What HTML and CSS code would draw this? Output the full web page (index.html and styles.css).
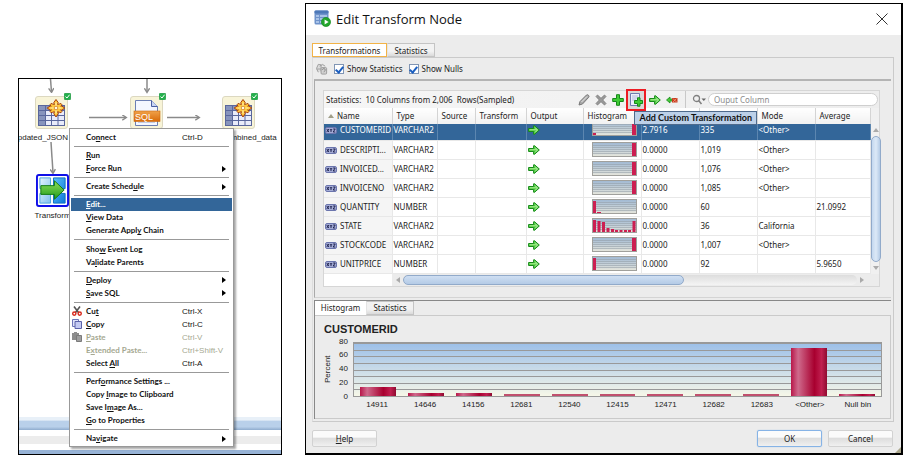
FILE: index.html
```html
<!DOCTYPE html>
<html lang="en">
<head>
<meta charset="utf-8">
<title>Edit Transform Node</title>
<link rel="stylesheet" href="styles.css">
</head>
<body>
<svg class="defs" aria-hidden="true">
  <defs>
    <linearGradient id="gThumb" x1="0" y1="0" x2="0" y2="1"><stop offset="0" stop-color="#9fb8d3"/><stop offset="1" stop-color="#e6e6dc"/></linearGradient>
    <linearGradient id="gOrange" x1="0" y1="0" x2="0" y2="1"><stop offset="0" stop-color="#f0a24a"/><stop offset="1" stop-color="#d96a08"/></linearGradient>
    <linearGradient id="gBlue" x1="0" y1="0" x2="1" y2="1"><stop offset="0" stop-color="#e4f4fd"/><stop offset="1" stop-color="#7fc0ee"/></linearGradient>
    <linearGradient id="gBlue2" x1="0" y1="0" x2="1" y2="1"><stop offset="0" stop-color="#5cc0fb"/><stop offset="1" stop-color="#0d78d8"/></linearGradient>
    <linearGradient id="gGreen" x1="0" y1="0" x2="0" y2="1"><stop offset="0" stop-color="#8fe05a"/><stop offset="1" stop-color="#1f9a1c"/></linearGradient>
    <marker id="head" viewBox="0 0 8 8" refX="6" refY="4" markerWidth="6" markerHeight="6" markerUnits="userSpaceOnUse" orient="auto"><path d="M1 .5L6.500 4L1 7.500" fill="none" stroke="#8a8a8a" stroke-width="1.800"/></marker>
  </defs>
  <symbol id="table-node" viewBox="0 0 33 33">
    <rect x=".5" y=".5" width="32" height="32" rx="2.500" fill="#f8f4d8" stroke="#dcd8c0"/>
    <rect x="3.500" y="9.500" width="26" height="20" fill="#e9ecfa" stroke="#5a679c"/>
    <path d="M4 10h6v19H4zM4 10h25v4H4z" fill="#8794bd"/>
    <path d="M10.500 10v19M16.500 10v19M23 10v19M4 14.500h25M4 19.500h25M4 24.500h25" stroke="#5a679c" fill="none"/>
    <path d="M21 3.500l2.200 3-.6 2 2-.6 1.400-.4 1 1.300-1.200 1.500 1-.3 3 2-3 2.200-1.200-.4 1.400 1.600-1 1.300-1.600-.4-1.800-.6.600 2-2.200 3.300-2.200-3.300.6-2-1.800.6-1.600.4-1-1.300 1.400-1.600-1.200.4-3-2.200 3-2 1 .3-1.200-1.500 1-1.300 1.400.4 2 .6-.6-2z" fill="#ffc83c" stroke="#a8400c"/>
    <path d="M21 6.500v11M15.500 12h11" stroke="#fff0a8" stroke-width="1.200"/>
    <circle cx="21" cy="12" r="1.800" fill="#fffbe0" stroke="#c86a10" stroke-width=".7"/>
  </symbol>
  <symbol id="sql-node" viewBox="0 0 33 33">
    <rect x=".5" y=".5" width="32" height="32" rx="2.500" fill="#f8f4d8" stroke="#dcd8c0"/>
    <path d="M5.500 4.500h16l6 6v19h-22z" fill="#f4f7ff" stroke="#6c7fb4"/>
    <path d="M21.500 4.500v6h6" fill="#c9d6f4" stroke="#4a5fa0"/>
    <path d="M8 26.500h17" stroke="#c4cde4"/>
    <rect x="4" y="15" width="26" height="10.500" fill="url(#gOrange)" stroke="#c8680f" stroke-width=".6"/>
    <text x="14" y="23.500" text-anchor="middle" class="sql-text">SQL</text>
  </symbol>
  <symbol id="transform-node" viewBox="0 0 34 34">
    <rect x="1" y="1" width="32" height="32" rx="2" fill="#fff" stroke="#1010e8" stroke-width="2"/>
    <path d="M4 4h11v11H4zM4 20h11v10H4z" fill="url(#gBlue)" stroke="#4aa3dd"/>
    <path d="M18 4h12v11H18zM18 20h12v10H18z" fill="url(#gBlue2)" stroke="#0c6fc4"/>
    <path d="M5 12h14V7l10 9.500L19 26v-5H5z" fill="url(#gGreen)" stroke="#127a12"/>
  </symbol>
  <symbol id="ok-badge" viewBox="0 0 7 7"><rect x=".3" y=".3" width="6.400" height="6.400" rx="1" fill="#22b14c" stroke="#0f8a30" stroke-width=".6"/><path d="M1.500 3.600L3 5l2.600-3.300" fill="none" stroke="#fff"/></symbol>
  <symbol id="xyz" viewBox="0 0 12 7"><rect x=".5" y=".5" width="11" height="6" rx="1.500" fill="#a4acd6" stroke="#6b75ad"/><path d="M1.800 2l2 3M3.800 2l-2 3M5 2l1 1.500L7 2M6 3.500V5M8.200 2h2l-2 3h2" fill="none" stroke="#181c48" stroke-width=".9"/></symbol>
  <symbol id="go" viewBox="0 0 12 10"><path d="M.6 3.500h5V.8l.9-.1L11.300 5 6.500 9.300l-.9-.1V6.500h-5z" fill="#49c93a" stroke="#178a1a"/><path d="M1.500 4.800h7" stroke="#b4f29a"/><path d="M7 2.500L9.500 5 7 7.500" fill="none" stroke="#e2fbd0" stroke-width=".8"/></symbol>
  <symbol id="thumb" viewBox="0 0 45 15"><rect x=".5" y=".5" width="44" height="14" fill="url(#gThumb)" stroke="#a0a09c"/><path d="M1 3.500h43M1 5.500h43M1 7.500h43M1 9.500h43M1 11.500h43" stroke="#929ca6" stroke-opacity=".55"/></symbol>
  <symbol id="thumb-end" viewBox="0 0 45 15"><use href="#thumb" width="45" height="15"/><path d="M40 1h4v13h-4z" fill="#cc1f52"/></symbol>
  <symbol id="thumb-start" viewBox="0 0 45 15"><use href="#thumb" width="45" height="15"/><path d="M1 2h3v12h-3z" fill="#cc1f52"/></symbol>
</svg>

<section class="canvas" aria-label="Workflow">
  <svg class="links" viewBox="0 0 262 376" aria-hidden="true">
    <g fill="none" stroke="#8a8a8a" stroke-width="1.500">
      <path d="M31.500 0l1 13" marker-end="url(#head)"/><path d="M128 0v13" marker-end="url(#head)"/>
      <path d="M70 38.500h37" marker-end="url(#head)"/><path d="M148 38.500h32" marker-end="url(#head)"/>
      <path d="M32 63l2 31" marker-end="url(#head)"/>
    </g>
  </svg>
  <div class="node node-a"><svg class="pic"><use href="#table-node"/></svg><svg class="badge"><use href="#ok-badge"/></svg><span>updated_JSON</span></div>
  <div class="node node-b"><svg class="pic"><use href="#sql-node"/></svg><svg class="badge"><use href="#ok-badge"/></svg></div>
  <div class="node node-c"><svg class="pic"><use href="#table-node"/></svg><svg class="badge"><use href="#ok-badge"/></svg><span>combined_data</span></div>
  <div class="node node-d"><svg class="pic"><use href="#transform-node"/></svg><span>Transform</span></div>
  <div class="bands"><i class="band-blue"></i><i class="band-gray"></i><i class="band-foot"></i></div>

  <div class="menu" role="menu">
    <button role="menuitem"><span>Co<u>n</u>nect</span><kbd>Ctrl-D</kbd></button>
    <hr>
    <button role="menuitem"><span><u>R</u>un</span></button>
    <button role="menuitem" class="sub"><span><u>F</u>orce Run</span></button>
    <hr>
    <button role="menuitem" class="sub"><span>Create Sched<u>u</u>le</span></button>
    <hr>
    <button role="menuitem" class="active"><span><u>E</u>dit...</span></button>
    <button role="menuitem"><span><u>V</u>iew Data</span></button>
    <button role="menuitem"><span>Generate Appl<u>y</u> Chain</span></button>
    <hr>
    <button role="menuitem"><span>Sho<u>w</u> Event Log</span></button>
    <button role="menuitem"><span>Va<u>l</u>idate Parents</span></button>
    <hr>
    <button role="menuitem" class="sub"><span><u>D</u>eploy</span></button>
    <button role="menuitem" class="sub"><span><u>S</u>ave SQL</span></button>
    <hr>
    <button role="menuitem"><svg viewBox="0 0 10 10"><path d="M2 .5l4.500 6M8 .5L3.500 6.500" stroke="#555" stroke-width="1.600"/><circle cx="2.300" cy="7.600" r="1.600" fill="none" stroke="#d8281c" stroke-width="1.400"/><circle cx="7.700" cy="7.600" r="1.600" fill="none" stroke="#d8281c" stroke-width="1.400"/></svg><span>Cu<u>t</u></span><kbd>Ctrl-X</kbd></button>
    <button role="menuitem"><svg viewBox="0 0 10 10"><path d="M.5.500h6v7h-6z" fill="#dfe3fa" stroke="#6d74b8"/><path d="M3 2.500h6.500v7H3z" fill="#c3c9f2" stroke="#5a61a8"/></svg><span><u>C</u>opy</span><kbd>Ctrl-C</kbd></button>
    <button role="menuitem" disabled><svg viewBox="0 0 10 10"><path d="M0 1h2V0h3v1h2v7H0z" fill="#8d8d8d"/><path d="M4.500 3.500H9.500v6h-5z" fill="#9e9e9e" stroke="#7a7a7a"/></svg><span><u>P</u>aste</span><kbd>Ctrl-V</kbd></button>
    <button role="menuitem" disabled><span>E<u>x</u>tended Paste...</span><kbd>Ctrl+Shift-V</kbd></button>
    <button role="menuitem"><span>Select <u>A</u>ll</span><kbd>Ctrl-A</kbd></button>
    <hr>
    <button role="menuitem"><span>Perf<u>o</u>rmance Settings ...</span></button>
    <button role="menuitem"><span>Copy <u>I</u>mage to Clipboard</span></button>
    <button role="menuitem"><span>Save I<u>m</u>age As...</span></button>
    <button role="menuitem"><span><u>G</u>o to Properties</span></button>
    <hr>
    <button role="menuitem" class="sub"><span>Na<u>v</u>igate</span></button>
  </div>
</section>

<main class="dialog" role="dialog" aria-labelledby="dlg-title">
  <header class="titlebar">
    <svg class="app-icon" viewBox="0 0 17 17"><rect x=".5" y=".5" width="14" height="14" rx="1.500" fill="#6f93cb"/><rect x=".5" y=".5" width="14" height="3" rx="1" fill="#4d78b8"/><path d="M2 5h3v2H2zM6 5h7v2H6zM2 8h3v2H2zM6 8h7v2H6zM2 11h3v2H2zM6 11h7v2H6z" fill="#a9c3e8"/><circle cx="12" cy="12" r="4.600" fill="#23a52c" stroke="#0f8a1a" stroke-width=".6"/><path d="M10.600 9.400l4 2.600-4 2.600z" fill="#fff"/></svg>
    <h1 id="dlg-title">Edit Transform Node</h1>
    <button class="close" aria-label="Close"><svg viewBox="0 0 12 12"><path d="M.5.500l11 11M11.500.500l-11 11" stroke="#333" fill="none"/></svg></button>
  </header>

  <div class="content">
    <div class="tabs top" role="tablist"><button role="tab" class="tab on" aria-selected="true">Transformations</button><button role="tab" class="tab">Statistics</button></div>
    <div class="frame">
      <div class="options">
        <svg class="opt-icon" viewBox="0 0 13 12"><path d="M2.500 9.500l-2-4 2-4.500 3 .5v7M1 6h4M4 3l3-2 3 2" fill="#dcdcdc" stroke="#9a9a9a"/><rect x="5.500" y="4.500" width="6" height="7" rx="1" fill="#d2d2d2" stroke="#999"/><path d="M7 7c0-2 3-2 3 0s-1.500 1-1.500 2.500" fill="none" stroke="#888"/></svg>
        <label><input type="checkbox" checked>Show Statistics</label>
        <label><input type="checkbox" checked>Show Nulls</label>
      </div>
      <div class="upper">
        <div class="grid-panel">
          <div class="toolbar">
            <span class="summary">Statistics:&nbsp; 10 Columns from 2,006&nbsp; Rows(Sampled)</span>
            <button class="tool" aria-label="Edit"><svg viewBox="0 0 12 12"><path d="M1 11l1-3.500L8.500 1q1-.8 2 .3t.2 2L4.500 10z" fill="#aaa" stroke="#777"/><path d="M3.500 8L9 2.500" stroke="#e6e6e6"/></svg></button>
            <button class="tool" aria-label="Remove"><svg viewBox="0 0 12 12"><path d="M1 2.500L2.500 1 6 4.300 9.500 1 11 2.500 7.700 6 11 9.500 9.500 11 6 7.700 2.500 11 1 9.500 4.300 6z" fill="#999" stroke="#777" stroke-width=".8"/></svg></button>
            <button class="tool" aria-label="Add"><svg viewBox="0 0 12 12"><path d="M4.500.7h3v3.800h3.800v3H7.500v3.800h-3V7.500H.7v-3h3.800z" fill="#3fcb35" stroke="#15881a"/></svg></button>
            <button class="tool marked" aria-label="Add Custom Transformation"><svg viewBox="0 0 14 14"><path d="M1.500.500h9v12h-9z" fill="#eceffb" stroke="#7079ae"/><path d="M3 3h6M3 5h6M3 7h4" stroke="#b4b9de"/><path d="M8.500 4.800h2.500V7.500h2.500V10.500H11v2.700H8.500V10.500H5.500V7.500h3z" fill="#3fcb35" stroke="#15881a"/></svg></button>
            <button class="tool" aria-label="Include"><svg viewBox="0 0 12 10"><use href="#go"/></svg></button>
            <button class="tool" aria-label="Exclude"><svg viewBox="0 0 12 10"><path d="M.5 5L4 2v2h3v2H4v2z" fill="#49c93a" stroke="#178a1a" stroke-width=".8"/><path d="M6 3h5.500v4.500H6z" fill="#c63a1c"/><path d="M7 3.500l3.500 3.500M10.500 3.500L7 7" stroke="#f29a80" stroke-width=".8"/></svg></button>
            <span class="divider"></span>
            <label class="search" for="q"><svg viewBox="0 0 15 11"><circle cx="4.500" cy="4.500" r="3" fill="none" stroke="#808080" stroke-width="1.300"/><path d="M6.800 6.800L9.500 10" stroke="#808080" stroke-width="1.600"/><path d="M9.500 4.500h4.500l-2.200 2.500z" fill="#666"/></svg></label>
            <input id="q" type="text" placeholder="Ouput Column">
            <span class="tooltip" role="tooltip">Add Custom Transformation</span>
          </div>
          <div class="grid-body">
            <table>
              <colgroup><col class="c-name"><col class="c-type"><col class="c-src"><col class="c-trn"><col class="c-out"><col class="c-num"><col class="c-num"><col class="c-num"><col class="c-num"><col class="c-avg"></colgroup>
              <thead><tr><th class="sorted">Name</th><th>Type</th><th>Source</th><th>Transform</th><th>Output</th><th>Histogram</th><th></th><th></th><th>Mode</th><th>Average</th></tr></thead>
              <tbody>
                <tr class="selected"><td><svg class="xyz"><use href="#xyz"/></svg>CUSTOMERID</td><td>VARCHAR2</td><td></td><td></td><td><svg class="go"><use href="#go"/></svg></td><td><svg class="thumb" viewBox="0 3 45 12"><use href="#thumb-end" width="45" height="15"/><path d="M1 12h3v2h-3z" fill="#cc1f52"/></svg></td><td>2.7916</td><td>335</td><td>&lt;Other&gt;</td><td></td></tr>
                <tr><td><svg class="xyz"><use href="#xyz"/></svg>DESCRIPTI...</td><td>VARCHAR2</td><td></td><td></td><td><svg class="go"><use href="#go"/></svg></td><td><svg class="thumb"><use href="#thumb-end"/></svg></td><td>0.0000</td><td>1,019</td><td>&lt;Other&gt;</td><td></td></tr>
                <tr><td><svg class="xyz"><use href="#xyz"/></svg>INVOICED...</td><td>VARCHAR2</td><td></td><td></td><td><svg class="go"><use href="#go"/></svg></td><td><svg class="thumb"><use href="#thumb-end"/></svg></td><td>0.0000</td><td>1,076</td><td>&lt;Other&gt;</td><td></td></tr>
                <tr><td><svg class="xyz"><use href="#xyz"/></svg>INVOICENO</td><td>VARCHAR2</td><td></td><td></td><td><svg class="go"><use href="#go"/></svg></td><td><svg class="thumb"><use href="#thumb-end"/></svg></td><td>0.0000</td><td>1,085</td><td>&lt;Other&gt;</td><td></td></tr>
                <tr><td><svg class="xyz"><use href="#xyz"/></svg>QUANTITY</td><td>NUMBER</td><td></td><td></td><td><svg class="go"><use href="#go"/></svg></td><td><svg class="thumb" viewBox="0 0 45 15"><use href="#thumb-start" width="45" height="15"/><path d="M5 13h4v1h-4z" fill="#cc1f52"/></svg></td><td>0.0000</td><td>60</td><td></td><td>21.0992</td></tr>
                <tr><td><svg class="xyz"><use href="#xyz"/></svg>STATE</td><td>VARCHAR2</td><td></td><td></td><td><svg class="go"><use href="#go"/></svg></td><td><svg class="thumb" viewBox="0 0 45 15"><use href="#thumb" width="45" height="15"/><path d="M1 2h3v12h-3zM5.500 3h3v11h-3zM10 4h3v10h-3zM14.500 10h3v4h-3zM19 11h3v3h-3zM23 12h3v2h-3zM27.500 12h3v2h-3zM32 12h3v2h-3zM36 12h3v2h-3zM40.500 3h3v11h-3z" fill="#cc1f52"/></svg></td><td>0.0000</td><td>36</td><td>California</td><td></td></tr>
                <tr><td><svg class="xyz"><use href="#xyz"/></svg>STOCKCODE</td><td>VARCHAR2</td><td></td><td></td><td><svg class="go"><use href="#go"/></svg></td><td><svg class="thumb"><use href="#thumb-end"/></svg></td><td>0.0000</td><td>1,007</td><td>&lt;Other&gt;</td><td></td></tr>
                <tr><td><svg class="xyz"><use href="#xyz"/></svg>UNITPRICE</td><td>NUMBER</td><td></td><td></td><td><svg class="go"><use href="#go"/></svg></td><td><svg class="thumb"><use href="#thumb-start"/></svg></td><td>0.0000</td><td>92</td><td></td><td>5.9650</td></tr>
              </tbody>
            </table>
            <div class="vscroll"><i class="up"></i><b></b><i class="down"></i></div>
          </div>
          <div class="hscroll"><div class="htrack"><i class="left"></i><div class="rail"><b></b></div><i class="right"></i></div></div>
        </div>
      </div>

      <div class="lower">
        <div class="tabs" role="tablist"><button role="tab" class="tab on" aria-selected="true">Histogram</button><button role="tab" class="tab">Statistics</button></div>
        <div class="chart-panel">
          <h2>CUSTOMERID</h2>
          <div class="chart">
            <span class="ylabel">Percent</span>
            <div class="yaxis"><span>80</span><span>60</span><span>40</span><span>20</span><span>0</span></div>
            <div class="plot">
              <i style="height:17%"></i><i style="height:4%"></i><i style="height:4%"></i><i class="low" style="height:2%"></i><i class="low" style="height:2%"></i><i class="low" style="height:2%"></i><i class="low" style="height:2%"></i><i class="low" style="height:2%"></i><i class="low" style="height:2%"></i><i style="height:90%"></i><i style="height:3%"></i>
            </div>
            <div class="xaxis"><span>14911</span><span>14646</span><span>14156</span><span>12681</span><span>12540</span><span>12415</span><span>12471</span><span>12682</span><span>12683</span><span>&lt;Other&gt;</span><span>Null bin</span></div>
          </div>
        </div>
      </div>
    </div>
  </div>

  <footer class="actions">
    <button class="btn help"><span><u>H</u>elp</span></button>
    <button class="btn ok">OK</button>
    <button class="btn">Cancel</button>
    <svg class="grip" viewBox="0 0 6 6" aria-hidden="true"><path d="M6 0v6H0z" fill="#aaa68c"/></svg>
  </footer>
</main>
</body>
</html>
```

FILE: styles.css
```css
* { box-sizing: border-box; }

body {
  margin: 0;
  padding: 3px 2px 1px 18px;
  min-height: 100vh;
  display: flex;
  gap: 23px;
  background: #fff;
  color: #222;
  font: 8px/12px "Noto Sans", sans-serif;
}

button, input { font: inherit; color: inherit; }
button { border: 0; padding: 0; background: none; }
svg { display: block; }
.defs { position: absolute; width: 0; height: 0; }

/* Workflow canvas */
.canvas {
  flex: 0 0 264px;
  margin-top: 75px;
  position: relative;
  border: 1px solid #000;
  background: #fff;
  overflow: hidden;
  display: flex;
  flex-direction: column;
  justify-content: flex-end;
  font-family: "Liberation Sans", sans-serif;
}
.links { position: absolute; left: 0; top: 0; width: 262px; height: 376px; }
.node { position: absolute; width: 33px; display: flex; flex-direction: column; align-items: center; gap: 3px; white-space: nowrap; }
.node .pic { width: 33px; height: 33px; flex: none; }
.node .badge { position: absolute; top: -3px; right: -3px; width: 7px; height: 7px; }
.node-a { left: 16px; top: 17px; align-items: flex-end; }
.node-b { left: 111px; top: 17px; }
.node-c { left: 203px; top: 17px; align-items: flex-start; }
.node-d { left: 17px; top: 95px; }
.sql-text { font: 9px "Liberation Sans", sans-serif; fill: #fff; }
.bands { display: flex; flex-direction: column; gap: 6px; }
.bands i { display: block; }
.band-blue { height: 13px; background: linear-gradient(#e8f0f8 0 25%, #b9d0ea 30%, #b9d0ea 75%, #8facce); }
.band-gray { height: 8px; background: #ececec; }
.band-foot { height: 4px; background: #97b3d6; }

/* Context menu */
.menu {
  position: absolute;
  left: 50px;
  top: 49px;
  bottom: 7px;
  width: 165px;
  padding: 2px 1px 1px;
  display: flex;
  flex-direction: column;
  background: #fff;
  border: 1px solid #999;
  box-shadow: 2px 2px 2px rgba(0, 0, 0, .35);
  color: #111;
  font: 700 8px/13px Lato, sans-serif;
}
.menu button {
  flex: none;
  height: 13px;
  display: grid;
  grid-template-columns: 15px 96px 1fr;
  align-items: center;
  text-align: left;
  white-space: nowrap;
}
.menu button span { grid-column: 2; grid-row: 1; }
.menu kbd { grid-column: 3; grid-row: 1; font: 8px/13px "Liberation Sans", sans-serif; }
.menu svg { grid-column: 1; grid-row: 1; width: 10px; height: 10px; margin-left: 1px; }
.menu hr {
  flex: 1;
  width: calc(100% - 6px);
  margin: 0 3px;
  border: 0;
  background: linear-gradient(#999, #999) center / 100% 1px no-repeat;
}
.menu .active { background: #336699; color: #fff; }
.menu button:disabled { color: #a5a891; }
.menu .sub::after {
  content: "";
  grid-column: 3;
  grid-row: 1;
  justify-self: end;
  margin-right: 6px;
  border-left: 4px solid #000;
  border-top: 3px solid transparent;
  border-bottom: 3px solid transparent;
}

/* Dialog */
.dialog {
  flex: 1;
  min-width: 0;
  display: flex;
  flex-direction: column;
  border: solid #000;
  border-width: 1px 2px 2px 1px;
  background: #ececec;
}
.titlebar { height: 31px; padding: 0 13px 2px 8px; display: flex; align-items: center; gap: 5px; background: #fff; }
.app-icon { width: 17px; height: 17px; }
.titlebar h1 { margin: 0; flex: 1; font: 13px/20px "Open Sans", sans-serif; color: #111; }
.close svg { width: 12px; height: 12px; }
.content { flex: 1; display: flex; flex-direction: column; padding: 8px 7px 0 6px; }

.tabs { display: flex; height: 14px; }
.tab {
  width: 48px;
  border: 1px solid #c4c4c4;
  border-left-color: #e4e4e4;
  background: linear-gradient(#f2f2f2 60%, #dadada);
  line-height: 11px;
}
.tab.on { width: 51px; border-color: #fff; background: #fff; }
.top .tab.on { width: 75px; border-color: #f2b347; }

.frame { flex: 1; display: flex; flex-direction: column; padding: 0 2px 2px 1px; border: 1px solid #cacaca; border-left-color: #ddd; }
.options { height: 21px; padding-left: 2px; display: flex; align-items: center; gap: 6px; }
.opt-icon { width: 12px; height: 12px; }
.options label { display: flex; align-items: center; gap: 3px; }
.options input {
  appearance: none;
  width: 10px;
  height: 10px;
  margin: 0;
  border: 1px solid #8095b4;
  background: #fff;
  display: grid;
  place-items: center;
}
.options input:checked::after {
  content: "";
  width: 3px;
  height: 6px;
  margin-bottom: 2px;
  border: solid #1c5fc0;
  border-width: 0 2px 2px 0;
  transform: rotate(40deg);
}

.upper { padding: 9px 11px 10px 8px; border-top: 2px solid #b4b4b4; border-left: 1px solid #aaa; border-bottom: 1px solid #d4d4d4; }
.grid-panel { border: 1px solid #d6d6d6; background: #f0f0f0; }
.toolbar { position: relative; height: 17px; padding-right: 1px; display: flex; align-items: center; background: linear-gradient(90deg, #f6f6f6, #ededed); }
.summary { flex: 1; padding-left: 2px; }
.tool { width: 17px; height: 17px; display: grid; place-items: center; }
.tool svg { width: 12px; height: 12px; }
.tool.marked { width: 20px; height: 22px; border: 2px solid #ed1c24; background: #d8d8d8; position: relative; }
.tool.marked svg { width: 14px; height: 14px; }
.divider { width: 1px; height: 17px; margin: 0 6px 0 5px; background: #c8c8c8; }
.search svg { width: 15px; height: 11px; }
.toolbar input {
  width: 170px;
  height: 13px;
  margin-left: 1px;
  padding: 0 5px;
  border: 1px solid #cfcfcf;
  border-radius: 7px;
  background: #fff;
}
.toolbar input::placeholder { color: #8c8c8c; opacity: 1; }
.tooltip {
  position: absolute;
  z-index: 2;
  right: 122px;
  top: 20px;
  padding: 0 4px;
  border: 1px solid #4e6a8c;
  background: #bcd0e8;
  color: #111;
  font: 700 9px/12px Lato, sans-serif;
  white-space: nowrap;
}

.grid-body { display: flex; }
table { flex: 1; width: 0; table-layout: fixed; border-collapse: collapse; background: #fff; }
.c-name { width: 68px; }
.c-type { width: 45px; }
.c-src { width: 38px; }
.c-trn { width: 51px; }
.c-out { width: 57px; }
.c-num { width: 58px; }
.c-avg { width: 55px; }
th {
  height: 16px;
  padding: 0 0 0 4px;
  text-align: left;
  font-weight: 400;
  line-height: 12px;
  border-right: 1px solid #d4d4d4;
  background: linear-gradient(#fff, #f1f1f1);
}
th.sorted::before {
  content: "";
  display: inline-block;
  margin: 0 3px 1px 0;
  border: solid transparent;
  border-width: 0 3px 4px;
  border-bottom-color: #a09e88;
}
td {
  height: 19px;
  padding: 0 0 0 1px;
  line-height: 12px;
  white-space: nowrap;
  overflow: hidden;
  border-right: 1px solid #e8e8e8;
  border-bottom: 1px solid #e8e8e8;
}
td:first-child { background: #f5f5f5; }
.selected td, .selected td:first-child { height: 16px; padding-bottom: 2px; background: #336699; color: #fff; border-right-color: #5c86b0; vertical-align: top; }
.xyz { display: inline-block; width: 12px; height: 7px; margin-right: 3px; vertical-align: -1px; }
.go { width: 12px; height: 10px; }
.thumb { width: 45px; height: 15px; margin-left: 7px; }
.selected .thumb { height: 12px; }
.selected .go { margin-top: 1px; }

.vscroll { width: 11px; margin-top: 16px; padding: 4px 0; display: flex; flex-direction: column; align-items: center; gap: 4px; }
.vscroll b { flex: 1; width: 10px; border-radius: 5px; border: 1px solid #91aaca; background: linear-gradient(90deg, #c4d8ef, #dce9f7, #b4cbe6); }
.vscroll i, .htrack i { border: 3px solid transparent; }
.up { border-top: 0 !important; border-bottom: 4px solid #aaa !important; }
.down { border-bottom: 0 !important; border-top: 4px solid #aaa !important; }
.hscroll { padding: 1px 11px 1px 68px; background: linear-gradient(90deg, #fff 68px, #ececec 68px); }
.htrack { height: 10px; display: flex; align-items: center; gap: 3px; padding: 0 4px; }
.left { border-left: 0 !important; border-right: 4px solid #aaa !important; }
.right { border-right: 0 !important; border-left: 4px solid #aaa !important; }
.rail { flex: 1; height: 10px; background: linear-gradient(#ddd, #f4f4f4); border-radius: 5px; }
.rail b { display: block; width: 62%; height: 10px; border-radius: 5px; border: 1px solid #91aaca; background: linear-gradient(#cfdff2, #b4cbe6); }

/* Lower panel */
.lower { flex: 1; margin-top: 2px; display: flex; flex-direction: column; border-top: 1px solid #888; border-left: 1px solid #888; }
.chart-panel { flex: 1; display: flex; flex-direction: column; padding: 7px 8px 0 9px; border: 1px solid #cacaca; border-left: 0; }
.chart-panel h2 { margin: 0; font: bold 11px/13px "Liberation Sans", sans-serif; }
.chart {
  margin-top: 6px;
  display: grid;
  grid-template-columns: 8px 17px 1fr;
  grid-template-rows: 55px 17px;
  column-gap: 2px;
  font-family: "Liberation Sans", sans-serif;
}
.ylabel { writing-mode: vertical-rl; transform: rotate(180deg); line-height: 8px; text-align: center; }
.yaxis { margin: -6px 3px -6px 0; display: flex; flex-direction: column; justify-content: space-between; text-align: right; }
.plot, .xaxis { display: grid; grid-template-columns: repeat(11, 1fr); grid-column: 3; }
.plot {
  align-items: end;
  border: 1px solid #999;
  background:
    repeating-linear-gradient(#999 0 1px, transparent 1px 12.5%),
    linear-gradient(#9cbfe8, #f6f7e8);
}
.plot i { margin: 0 6px; background: linear-gradient(90deg, #b8174a, #cf6a8c 20%, #a8002f 65%, #c02050 85%, #8f0a30); }
.plot i.low { background: #c0506e; }
.xaxis { align-items: center; text-align: center; }

.actions { position: relative; height: 31px; padding: 8px 8px 0 6px; display: flex; gap: 6px; }
.btn {
  width: 65px;
  height: 17px;
  border: 1px solid #d2d2d2;
  border-radius: 2px;
  background: linear-gradient(#fbfbfb 40%, #dedede 50%, #f0f0f0);
  line-height: 14px;
}
.btn.help { margin-right: auto; }
.btn.ok { border-color: #86b3e6; box-shadow: 0 0 1px #86b3e6; }
.grip { position: absolute; right: 0; bottom: 0; width: 6px; height: 6px; }
```
